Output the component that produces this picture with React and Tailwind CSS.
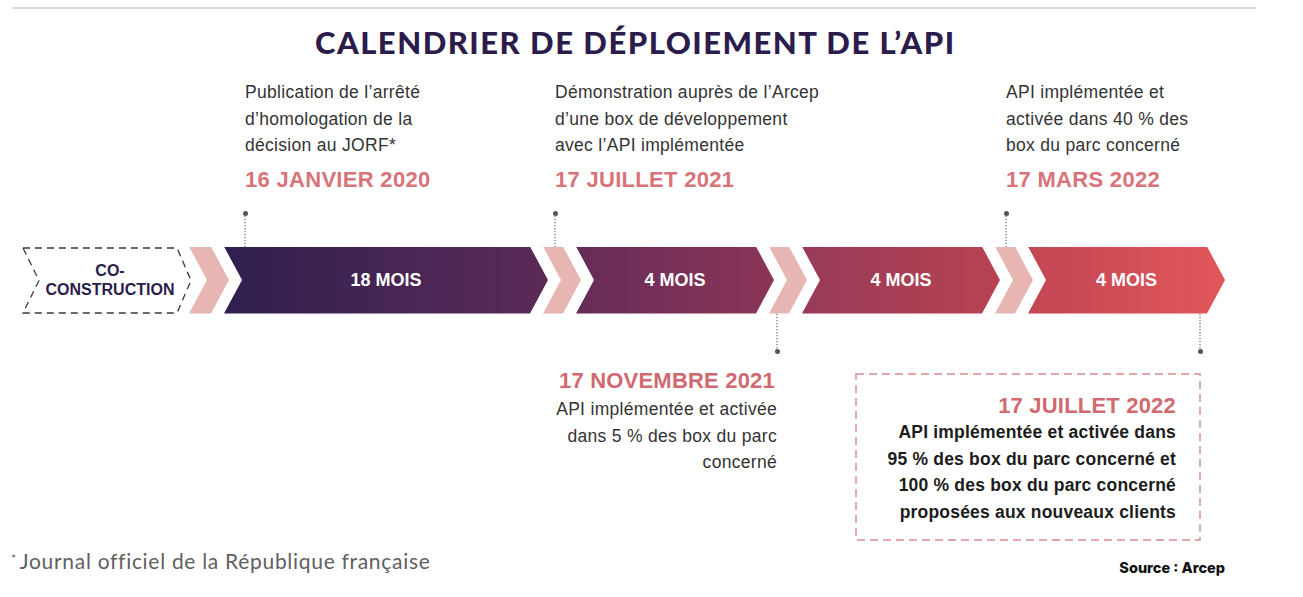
import React from "react";

const body = "font-['Liberation_Sans',Arial,sans-serif]";

function Connector({ h, className = "" }) {
  return (
    <svg width="2" height={h} className={className}>
      <line x1="1" y1="0" x2="1" y2={h} stroke="#6b6b6b" strokeWidth="1.2" strokeDasharray="1.2 1.8" />
    </svg>
  );
}

function Dot({ className = "" }) {
  return <div className={`w-[5px] h-[5px] rounded-full bg-[#555] ${className}`} />;
}

function TopLabel({ lines, date, width }) {
  return (
    <div className={`flex flex-col items-start ${width}`}>
      <p className="text-[17.5px] leading-[26.5px] text-[#333] tracking-[0.3px]">
        {lines.map((l, i) => (
          <React.Fragment key={i}>
            {l}
            {i < lines.length - 1 && <br />}
          </React.Fragment>
        ))}
      </p>
      <p className="mt-[8.5px] text-[22px] leading-[26px] font-bold text-[#d9737a] tracking-[0.3px]">{date}</p>
      <Dot className="mt-[17.5px] -ml-[2.5px]" />
      <Connector h={31} className="-ml-[1px]" />
    </div>
  );
}

const chev = "[clip-path:polygon(0_0,calc(100%_-_18px)_0,100%_50%,calc(100%_-_18px)_100%,0_100%,18px_50%)]";

function Pink({ first }) {
  return <div className={`shrink-0 bg-[#e8b6b2] ${chev} ${first ? "-ml-[3px] w-[40px]" : "-ml-[5px] w-[38px]"}`} />;
}

function Seg({ w, grad, label }) {
  return (
    <div className={`${w} shrink-0 -ml-[5px] ${grad} ${chev} flex items-center justify-center text-white font-bold text-[18px] tracking-[0px]`}>
      {label}
    </div>
  );
}

export default function App() {
  return (
    <div className={`w-[1303px] h-[597px] overflow-hidden bg-white ${body}`}>
      <div className="pt-[7px]">
        <div className="ml-[12px] w-[1244px] h-[2px] bg-[#dcdce0]" />
      </div>

      <h1 className="mt-[15px] ml-[315px] text-[31px] leading-[36px] font-black text-[#2b1c4b] font-['Lato',sans-serif] tracking-[1.5px] whitespace-nowrap">
        CALENDRIER DE DÉPLOIEMENT DE L’API
      </h1>

      <div className="mt-[19px] flex pl-[245px]">
        <TopLabel
          width="w-[310px]"
          lines={["Publication de l’arrêté", "d’homologation de la", "décision au JORF*"]}
          date="16 JANVIER 2020"
        />
        <TopLabel
          width="w-[451px]"
          lines={["Démonstration auprès de l’Arcep", "d’une box de développement", "avec l’API implémentée"]}
          date="17 JUILLET 2021"
        />
        <TopLabel
          width="flex-1"
          lines={["API implémentée et", "activée dans 40 % des", "box du parc concerné"]}
          date="17 MARS 2022"
        />
      </div>

      <div className="flex h-[67px] pl-[22px]">
        <div className="relative w-[170px] shrink-0 flex items-center justify-center">
          <svg className="absolute inset-0" width="170" height="67">
            <polygon
              points="1,1 155,1 169,33.5 155,66 1,66 17,33.5"
              fill="none"
              stroke="#3a3a3a"
              strokeWidth="1.3"
              strokeDasharray="7 5"
            />
          </svg>
          <p className="relative text-center text-[16px] leading-[19px] font-bold text-[#2b1c4b] pl-[6px]">
            CO-
            <br />
            CONSTRUCTION
          </p>
        </div>
        <Pink first />
        <Seg w="w-[324px]" grad="bg-linear-to-r from-[#2f1f50] to-[#5c2a57]" label="18 MOIS" />
        <Pink />
        <Seg w="w-[198px]" grad="bg-linear-to-r from-[#662b59] to-[#8c3556]" label="4 MOIS" />
        <Pink />
        <Seg w="w-[198px]" grad="bg-linear-to-r from-[#983a58] to-[#b84351]" label="4 MOIS" />
        <Pink />
        <Seg w="w-[197px]" grad="bg-linear-to-r from-[#c24653] to-[#e2575a]" label="4 MOIS" />
      </div>

      <div className="flex">
        <div className="w-[780px] flex flex-col items-end pr-[3px]">
          <Connector h={35} className="-mr-[1px]" />
          <Dot className="-mr-[2.5px]" />
          <p className="mt-[14.5px] mr-[2px] text-[22px] leading-[26px] font-bold text-[#d06a70] tracking-[0.2px]">
            17 NOVEMBRE 2021
          </p>
          <p className="mt-[2px] text-right text-[17.5px] leading-[26.5px] text-[#333] tracking-[0.3px]">
            API implémentée et activée
            <br />
            dans 5 % des box du parc
            <br />
            concerné
          </p>
        </div>
        <div className="ml-[75px] w-[346px] flex flex-col items-end">
          <Connector h={35} />
          <Dot className="-mr-[1.5px]" />
          <div className="relative mt-[19.5px] w-full h-[168px] pt-[20px] pr-[25px] flex flex-col items-end">
            <svg className="absolute inset-0" width="346" height="168">
              <rect x="1" y="1" width="344" height="166" fill="none" stroke="#d88b8e" strokeWidth="1.4" strokeDasharray="8 5" />
            </svg>
            <p className="relative text-[22px] leading-[26px] font-bold text-[#d06a70] tracking-[0.2px]">17 JUILLET 2022</p>
            <p className="relative text-right text-[17.5px] leading-[26.7px] font-bold text-[#1c1c1c] tracking-[0.2px] whitespace-nowrap">
              API implémentée et activée dans
              <br />
              95 % des box du parc concerné et
              <br />
              100 % des box du parc concerné
              <br />
              proposées aux nouveaux clients
            </p>
          </div>
        </div>
      </div>

      <div className="mt-[8px] flex items-end justify-between pl-[11px] pr-[78px]">
        <p className="text-[21px] leading-[24px] text-[#606060] font-['Lato',sans-serif] tracking-[0.7px]">
          <span className="relative -top-[6px] text-[12px] mr-[3px]">*</span>Journal officiel de la République française
        </p>
        <p className="text-[14.5px] leading-[17px] font-extrabold text-[#111] font-['Inter',sans-serif] mb-[1px]">
          Source : Arcep
        </p>
      </div>
    </div>
  );
}
